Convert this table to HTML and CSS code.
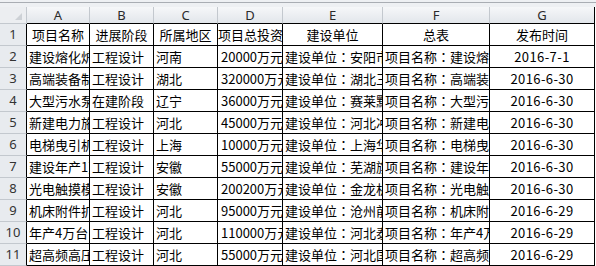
FILE: index.html
```html
<!DOCTYPE html>
<html lang="zh-CN">
<head>
<meta charset="utf-8">
<link rel="stylesheet" href="styles.css">
</head>
<body>
<div class="topbar"><div class="topline"></div></div>
<div class="sheet">
  <div class="corner"><span class="tri"></span></div>
  <div class="colh">A</div><div class="colh">B</div><div class="colh">C</div><div class="colh">D</div><div class="colh">E</div><div class="colh">F</div><div class="colh last">G</div>

  <div class="rowh">1</div>
  <div class="c ctr">项目名称</div><div class="c ctr">进展阶段</div><div class="c ctr">所属地区</div><div class="c ctr">项目总投资</div><div class="c ctr">建设单位</div><div class="c ctr">总表</div><div class="c ctr">发布时间</div>

  <div class="rowh">2</div>
  <div class="c">建设熔化炉项目</div><div class="c">工程设计</div><div class="c">河南</div><div class="c num">20000万元</div><div class="c">建设单位<span class="colon" lang="zh-TW">：</span>安阳市</div><div class="c">项目名称<span class="colon" lang="zh-TW">：</span>建设熔化</div><div class="c ctr num">2016-7-1</div>

  <div class="rowh">3</div>
  <div class="c">高端装备制造</div><div class="c">工程设计</div><div class="c">湖北</div><div class="c num">320000万元</div><div class="c">建设单位<span class="colon" lang="zh-TW">：</span>湖北三</div><div class="c">项目名称<span class="colon" lang="zh-TW">：</span>高端装备</div><div class="c ctr num">2016-6-30</div>

  <div class="rowh">4</div>
  <div class="c">大型污水泵项</div><div class="c">在建阶段</div><div class="c">辽宁</div><div class="c num">36000万元</div><div class="c">建设单位<span class="colon" lang="zh-TW">：</span>赛莱默</div><div class="c">项目名称<span class="colon" lang="zh-TW">：</span>大型污水</div><div class="c ctr num">2016-6-30</div>

  <div class="rowh">5</div>
  <div class="c">新建电力施工</div><div class="c">工程设计</div><div class="c">河北</div><div class="c num">45000万元</div><div class="c">建设单位<span class="colon" lang="zh-TW">：</span>河北冲</div><div class="c">项目名称<span class="colon" lang="zh-TW">：</span>新建电力</div><div class="c ctr num">2016-6-30</div>

  <div class="rowh">6</div>
  <div class="c">电梯曳引机项</div><div class="c">工程设计</div><div class="c">上海</div><div class="c num">10000万元</div><div class="c">建设单位<span class="colon" lang="zh-TW">：</span>上海华</div><div class="c">项目名称<span class="colon" lang="zh-TW">：</span>电梯曳引</div><div class="c ctr num">2016-6-30</div>

  <div class="rowh">7</div>
  <div class="c">建设年产1万</div><div class="c">工程设计</div><div class="c">安徽</div><div class="c num">55000万元</div><div class="c">建设单位<span class="colon" lang="zh-TW">：</span>芜湖旗</div><div class="c">项目名称<span class="colon" lang="zh-TW">：</span>建设年产</div><div class="c ctr num">2016-6-30</div>

  <div class="rowh">8</div>
  <div class="c">光电触摸模组</div><div class="c">工程设计</div><div class="c">安徽</div><div class="c num">200200万元</div><div class="c">建设单位<span class="colon" lang="zh-TW">：</span>金龙机</div><div class="c">项目名称<span class="colon" lang="zh-TW">：</span>光电触摸</div><div class="c ctr num">2016-6-30</div>

  <div class="rowh">9</div>
  <div class="c">机床附件扩建</div><div class="c">工程设计</div><div class="c">河北</div><div class="c num">95000万元</div><div class="c">建设单位<span class="colon" lang="zh-TW">：</span>沧州前</div><div class="c">项目名称<span class="colon" lang="zh-TW">：</span>机床附件</div><div class="c ctr num">2016-6-29</div>

  <div class="rowh">10</div>
  <div class="c">年产4万台电</div><div class="c">工程设计</div><div class="c">河北</div><div class="c num">110000万元</div><div class="c">建设单位<span class="colon" lang="zh-TW">：</span>河北泰</div><div class="c">项目名称<span class="colon" lang="zh-TW">：</span>年产4万</div><div class="c ctr num">2016-6-29</div>

  <div class="rowh">11</div>
  <div class="c">超高频高压电</div><div class="c">工程设计</div><div class="c">河北</div><div class="c num">55000万元</div><div class="c">建设单位<span class="colon" lang="zh-TW">：</span>河北国</div><div class="c">项目名称<span class="colon" lang="zh-TW">：</span>超高频高</div><div class="c ctr num">2016-6-29</div>
</div>
</body>
</html>
```

FILE: styles.css
```css
html, body {
  margin: 0;
  padding: 0;
  background: #ffffff;
}
body {
  width: 596px;
  height: 266px;
  overflow: hidden;
  font-family: "Noto Sans CJK SC", "Noto Sans", sans-serif;
}
.topbar {
  height: 7px;
  background: #eef0f3;
  padding-top: 2px;
  box-sizing: border-box;
}
.topline {
  height: 1px;
  background: #a9adb3;
}
.sheet {
  display: grid;
  grid-template-columns: 27px 63px 64px 64px 65px 100px 107px 105px;
  grid-template-rows: 17px repeat(11, 22px);
}
.corner {
  position: relative;
  background: #eceef1;
  border-right: 1px solid #c3c8ce;
  border-bottom: 1px solid #c3c8ce;
  box-sizing: border-box;
}
.tri {
  position: absolute;
  right: 4px;
  bottom: 3px;
  width: 0;
  height: 0;
  border-left: 7px solid transparent;
  border-bottom: 7px solid #cdd1d6;
}
.colh {
  background: linear-gradient(#f6f7f9, #e2e6eb);
  border-right: 1px solid #c3c8ce;
  border-bottom: 1px solid #000;
  box-sizing: border-box;
  font-family: "Noto Sans", sans-serif;
  font-size: 13px;
  line-height: 16px;
  color: #2b2b2b;
  text-align: center;
}
.colh.last {
  border-right: 1px solid #000;
}
.rowh {
  grid-column: 1;
  background: #e8ebef;
  border-right: 1px solid #000;
  border-bottom: 1px solid #c3c8ce;
  box-sizing: border-box;
  font-family: "Noto Sans", sans-serif;
  font-size: 13px;
  line-height: 21px;
  color: #333;
  text-align: center;
}
.c {
  border-right: 1px solid #000;
  border-bottom: 1px solid #000;
  box-sizing: border-box;
  font-size: 13px;
  line-height: 21px;
  color: #000;
  white-space: nowrap;
  overflow: hidden;
  padding-left: 2px;
}
.c.ctr {
  text-align: center;
  padding-left: 0;
}
.c.num {
  padding-left: 3px;
}
.c.ctr.num {
  padding-left: 0;
  letter-spacing: 0.4px;
}
.colon {
  font-family: "Noto Sans CJK TC", "Noto Sans CJK JP", sans-serif;
}
```
